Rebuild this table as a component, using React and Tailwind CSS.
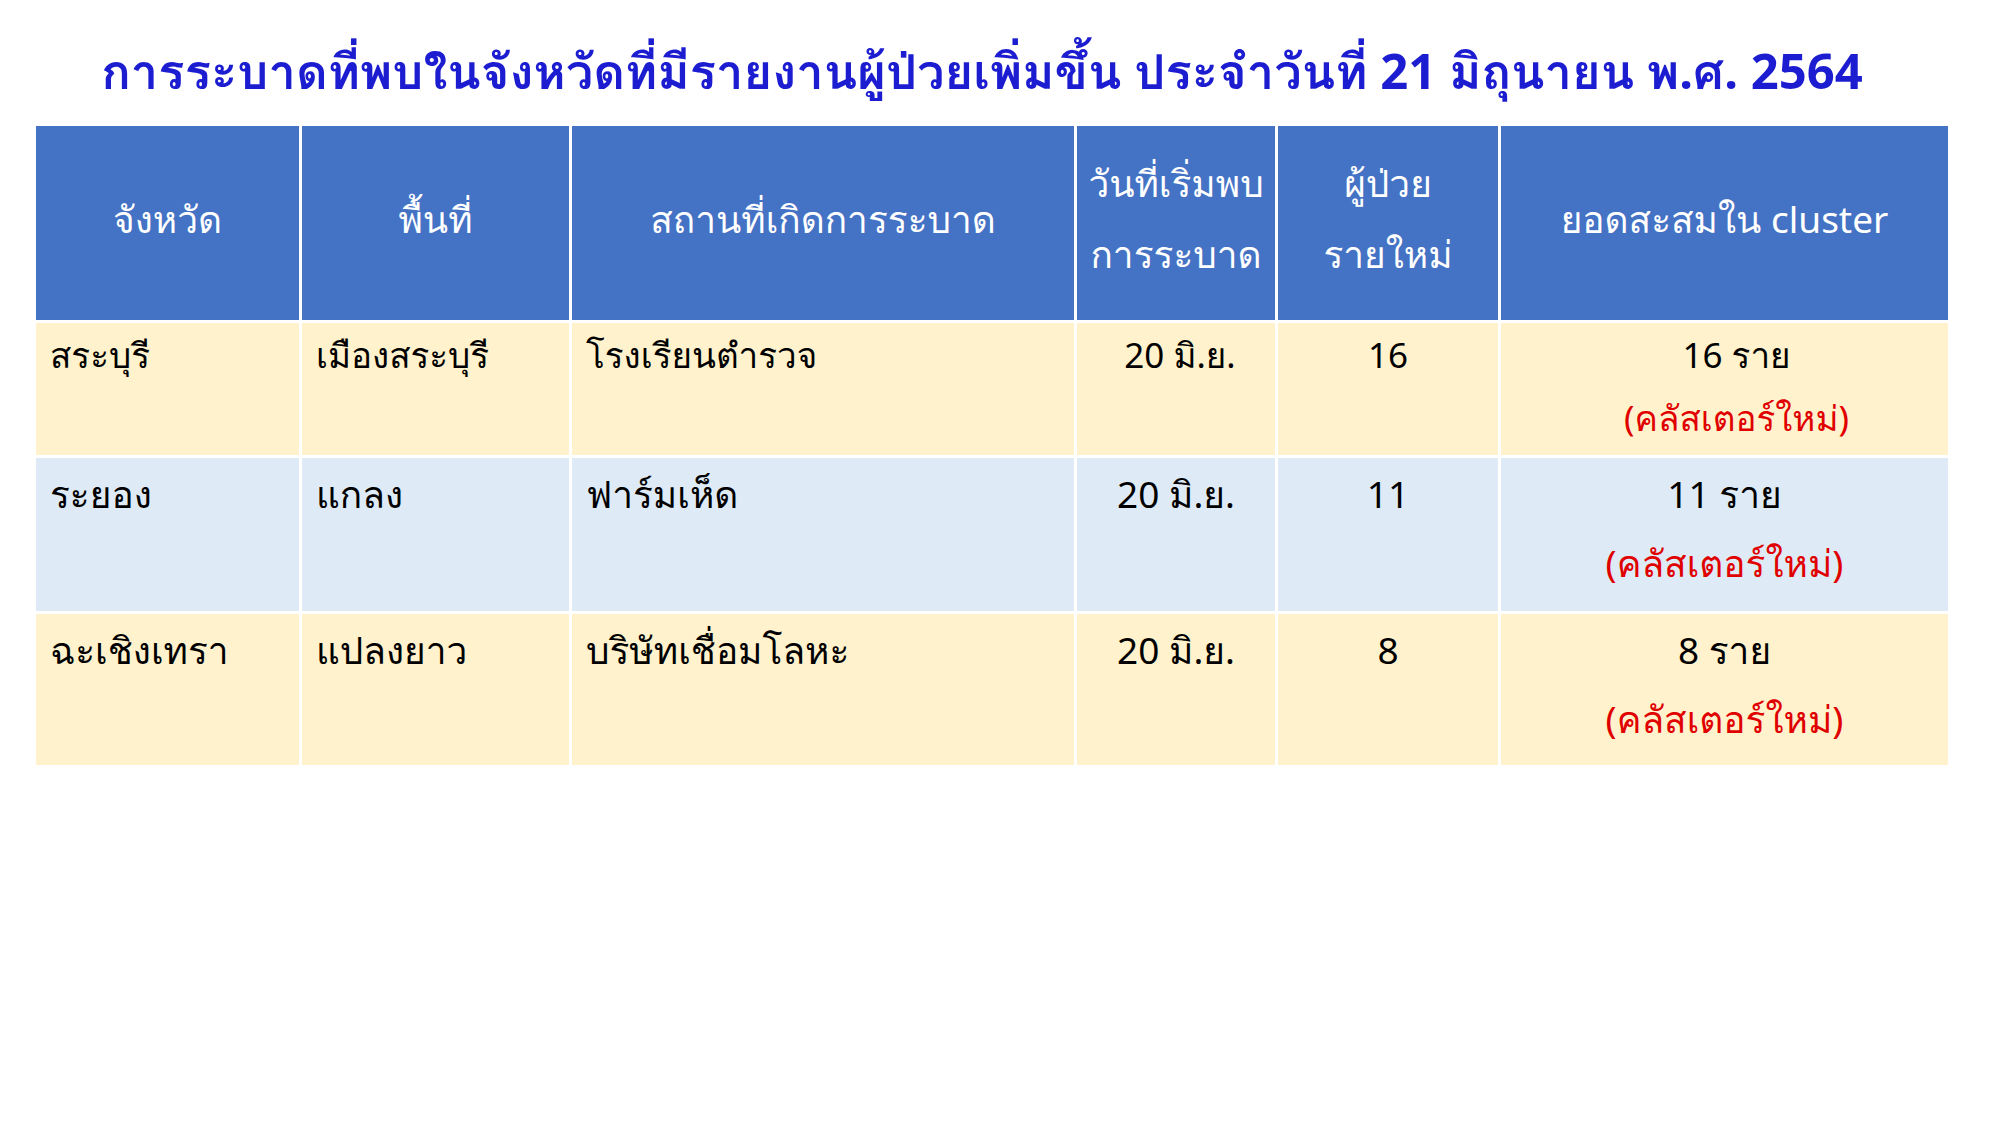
const font = { fontFamily: '"Noto Sans", "Loma", sans-serif' };

const rows = [
  {
    province: "สระบุรี",
    area: "เมืองสระบุรี",
    place: "โรงเรียนตำรวจ",
    date: "20 มิ.ย.",
    count: "16",
    bg: "bg-[#fff2cc]",
    h: "h-[132px]",
    lead: "leading-[63px] text-[35px]",
    shift: "pl-[8px]",
    shiftLast: "pl-[24px]",
  },
  {
    province: "ระยอง",
    area: "แกลง",
    place: "ฟาร์มเห็ด",
    date: "20 มิ.ย.",
    count: "11",
    bg: "bg-[#deebf7]",
    h: "h-[153px]",
    lead: "leading-[69px] text-[37px] pt-[1px]",
    shift: "",
    shiftLast: "",
  },
  {
    province: "ฉะเชิงเทรา",
    area: "แปลงยาว",
    place: "บริษัทเชื่อมโลหะ",
    date: "20 มิ.ย.",
    count: "8",
    bg: "bg-[#fff2cc]",
    h: "h-[151px]",
    lead: "leading-[69px] text-[37px] pt-[1px]",
    shift: "",
    shiftLast: "",
  },
];

const headers = [
  ["จังหวัด"],
  ["พื้นที่"],
  ["สถานที่เกิดการระบาด"],
  ["วันที่เริ่มพบ", "การระบาด"],
  ["ผู้ป่วย", "รายใหม่"],
  ["ยอดสะสมใน cluster"],
];

export default function App() {
  return (
    <div className="w-[2000px] h-[1125px] bg-white" style={font}>
      <h1 className="h-[126px] pt-[34px] pr-[36px] text-center text-[49px] font-bold leading-[72px] text-[#1c1cd0]">
        การระบาดที่พบในจังหวัดที่มีรายงานผู้ป่วยเพิ่มขึ้น ประจำวันที่ 21 มิถุนายน พ.ศ. 2564
      </h1>
      <div className="ml-[36px] grid w-[1912px] grid-cols-[263px_267px_502px_198px_220px_447px] gap-[3px]">
        {headers.map((lines, i) => (
          <div
            key={i}
            className="flex h-[194px] flex-col items-center justify-center bg-[#4472c4] pb-[10px] text-[37px] leading-[71px] text-white"
          >
            {lines.map((l) => (
              <span key={l} className="whitespace-nowrap">{l}</span>
            ))}
          </div>
        ))}
        {rows.map((r) => (
          <div key={r.province} className="contents">
            <div className={`${r.bg} ${r.h} ${r.lead} px-[14px] text-black`}>{r.province}</div>
            <div className={`${r.bg} ${r.h} ${r.lead} px-[14px] text-black`}>{r.area}</div>
            <div className={`${r.bg} ${r.h} ${r.lead} px-[14px] text-black`}>{r.place}</div>
            <div className={`${r.bg} ${r.h} ${r.lead} ${r.shift} text-center text-black`}>{r.date}</div>
            <div className={`${r.bg} ${r.h} ${r.lead} text-center text-black`}>{r.count}</div>
            <div className={`${r.bg} ${r.h} ${r.lead} ${r.shiftLast} flex flex-col items-center`}>
              <span className="text-black">{r.count} ราย</span>
              <span className="text-[#e00000]">(คลัสเตอร์ใหม่)</span>
            </div>
          </div>
        ))}
      </div>
    </div>
  );
}
